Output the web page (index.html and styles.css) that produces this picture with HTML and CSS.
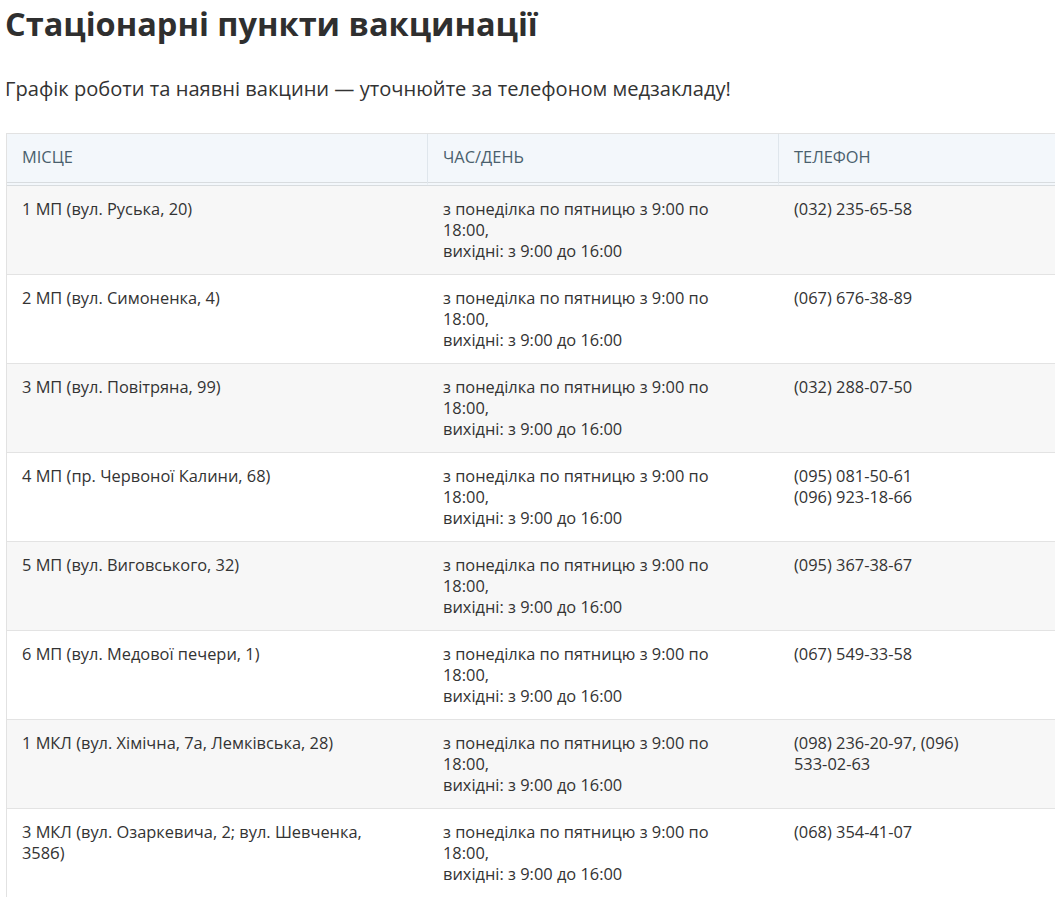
FILE: index.html
```html
<!DOCTYPE html>
<html lang="uk">
<head>
<meta charset="utf-8">
<title>Стаціонарні пункти вакцинації</title>
<link rel="stylesheet" href="styles.css">
</head>
<body>
<main class="page">
  <h1 class="title">Стаціонарні пункти вакцинації</h1>
  <p class="lead">Графік роботи та наявні вакцини — уточнюйте за телефоном медзакладу!</p>
  <table class="points">
    <colgroup>
      <col class="c-place">
      <col class="c-time">
      <col class="c-phone">
    </colgroup>
    <thead>
      <tr><th>Місце</th><th>Час/день</th><th>Телефон</th></tr>
    </thead>
    <tbody>
      <tr><td class="place">1 МП (вул. Руська, 20)</td><td class="time">з понеділка по пятницю з 9:00 по 18:00,<br>вихідні: з 9:00 до 16:00</td><td class="phone"><span class="num">(032) 235-65-58</span></td></tr>
      <tr><td class="place">2 МП (вул. Симоненка, 4)</td><td class="time">з понеділка по пятницю з 9:00 по 18:00,<br>вихідні: з 9:00 до 16:00</td><td class="phone"><span class="num">(067) 676-38-89</span></td></tr>
      <tr><td class="place">3 МП (вул. Повітряна, 99)</td><td class="time">з понеділка по пятницю з 9:00 по 18:00,<br>вихідні: з 9:00 до 16:00</td><td class="phone"><span class="num">(032) 288-07-50</span></td></tr>
      <tr><td class="place">4 МП (пр. Червоної Калини, 68)</td><td class="time">з понеділка по пятницю з 9:00 по 18:00,<br>вихідні: з 9:00 до 16:00</td><td class="phone"><span class="num">(095) 081-50-61</span><br><span class="num">(096) 923-18-66</span></td></tr>
      <tr><td class="place">5 МП (вул. Виговського, 32)</td><td class="time">з понеділка по пятницю з 9:00 по 18:00,<br>вихідні: з 9:00 до 16:00</td><td class="phone"><span class="num">(095) 367-38-67</span></td></tr>
      <tr><td class="place">6 МП (вул. Медової печери, 1)</td><td class="time">з понеділка по пятницю з 9:00 по 18:00,<br>вихідні: з 9:00 до 16:00</td><td class="phone"><span class="num">(067) 549-33-58</span></td></tr>
      <tr><td class="place">1 МКЛ (вул. Хімічна, 7а, Лемківська, 28)</td><td class="time">з понеділка по пятницю з 9:00 по 18:00,<br>вихідні: з 9:00 до 16:00</td><td class="phone"><span class="num">(098) 236-20-97</span>, (096) <span class="num">533-02-63</span></td></tr>
      <tr><td class="place">3 МКЛ (вул. Озаркевича, 2; вул. Шевченка, 358б)</td><td class="time">з понеділка по пятницю з 9:00 по 18:00,<br>вихідні: з 9:00 до 16:00</td><td class="phone"><span class="num">(068) 354-41-07</span></td></tr>
    </tbody>
  </table>
</main>
</body>
</html>
```
FILE: styles.css
```css
html, body {
  margin: 0;
  padding: 0;
  background: #ffffff;
}
body {
  font-family: "Open Sans", "Noto Sans", sans-serif;
  color: #333333;
}
.page {
  padding: 0 0 0 6px;
}
.title {
  margin: 4px 0 0 -1px;
  font-size: 32.5px;
  line-height: 40px;
  font-weight: 700;
  color: #2f2f2f;
}
.lead {
  margin: 31px 0 0 -1px;
  font-size: 20.1px;
  line-height: 28px;
}
.points {
  margin-top: 30px;
  border-collapse: separate;
  border-spacing: 0;
  table-layout: fixed;
  width: 1049px;
  border-top: 1px solid #e2e2e2;
  border-left: 1px solid #e2e2e2;
  font-size: 16.4px;
  line-height: 21px;
}
.c-place { width: 420px; }
.c-time { width: 351px; }
.c-phone { width: 277px; }
.points th {
  background: #f3f7fb;
  color: #4a5f6d;
  font-weight: 400;
  text-transform: uppercase;
  text-align: left;
  padding: 12px 15px 15px 15px;
  border-left: 1px solid #dfe6ec;
  border-bottom: 4px double #d8dcdf;
}
.points th:first-child { border-left: 0; }
.points td {
  vertical-align: top;
  padding: 12px 15px 13px 15px;
  border-top: 1px solid #e3e3e3;
}
.points tbody tr:first-child td { border-top: 0; }
.points tbody tr:nth-child(odd) td { background: #f7f7f7; }
.points tbody tr:nth-child(even) td { background: #ffffff; }
.points td.place { padding-right: 48px; }
.points td.time { padding-left: 16px; padding-right: 36px; }
.points td.phone { padding-left: 16px; padding-right: 35px; }
.num { white-space: nowrap; }
```
